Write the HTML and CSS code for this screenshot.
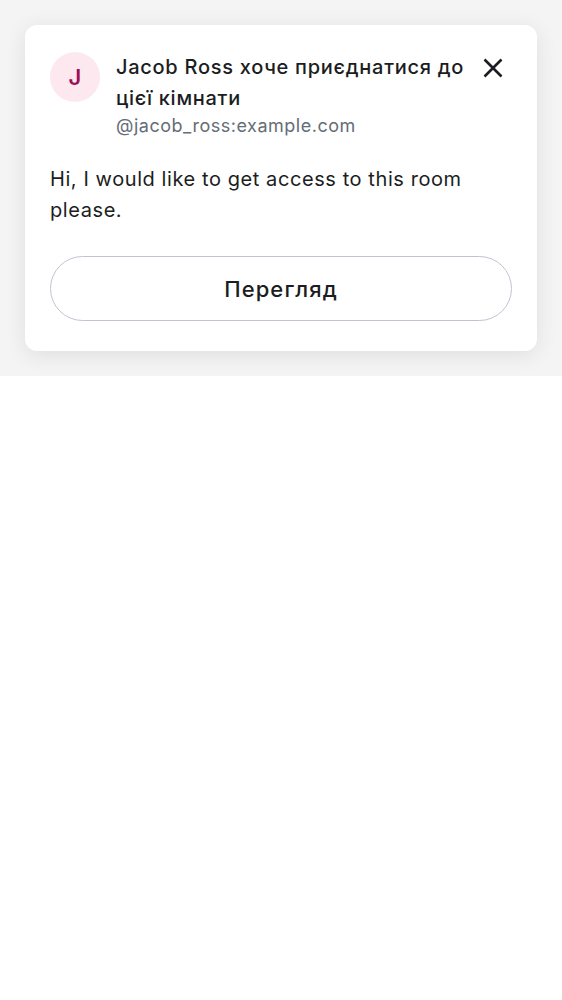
FILE: index.html
```html
<!DOCTYPE html>
<html lang="uk">
<head>
<meta charset="utf-8">
<link rel="stylesheet" href="styles.css">
</head>
<body>
<div class="stage">
  <div class="card">
    <div class="header">
      <div class="avatar">J</div>
      <div class="info">
        <div class="title">Jacob Ross хоче приєднатися до цієї кімнати</div>
        <div class="subtitle">@jacob_ross:example.com</div>
      </div>
      <button class="close" aria-label="Close">
        <svg width="20" height="20" viewBox="0 0 20 20"><path d="M1.5 1.5 L18.5 18.5 M18.5 1.5 L1.5 18.5" stroke="#1b1d22" stroke-width="2.6" fill="none"/></svg>
      </button>
    </div>
    <p class="message">Hi, I would like to get access to this room please.</p>
    <button class="view">Перегляд</button>
  </div>
</div>
</body>
</html>
```
FILE: styles.css
```css
* { box-sizing: border-box; }
html, body { margin: 0; padding: 0; background: #ffffff; }
body { font-family: Inter, Roboto, "Noto Sans", sans-serif; color: #1b1d22; }
.stage {
  background: #f4f4f4;
  padding: 25px;
  overflow: hidden;
}
.card {
  background: #ffffff;
  border-radius: 12px;
  box-shadow: 0 4px 22px rgba(0, 0, 0, 0.09);
  padding: 27px 25px 30px 25px;
  display: flex;
  flex-direction: column;
}
.header {
  display: flex;
  align-items: flex-start;
}
.avatar {
  width: 50px;
  height: 50px;
  border-radius: 50%;
  background: #fde8ef;
  color: #9b1056;
  font-weight: 600;
  font-size: 22px;
  display: flex;
  align-items: center;
  justify-content: center;
  flex-shrink: 0;
  margin-right: 16px;
}
.info { flex: 1; min-width: 0; }
.title {
  font-size: 20px;
  line-height: 31px;
  font-weight: 500;
  letter-spacing: 0.72px;
}
.subtitle {
  font-size: 18px;
  line-height: 24px;
  color: #656d77;
  letter-spacing: 0.52px;
}
.close {
  width: 38px;
  height: 32px;
  border: 0;
  background: none;
  padding: 0;
  display: flex;
  align-items: center;
  justify-content: center;
  flex-shrink: 0;
}
.message {
  margin: 26px 0 0 0;
  font-size: 20px;
  line-height: 31px;
  letter-spacing: 0.58px;
}
.view {
  margin-top: 30px;
  height: 65px;
  border: 1px solid #bfc5cf;
  border-radius: 33px;
  background: #ffffff;
  font-family: Inter, Roboto, "Noto Sans", sans-serif;
  font-size: 22px;
  font-weight: 500;
  letter-spacing: 1.1px;
  color: #1b1d22;
}
```
